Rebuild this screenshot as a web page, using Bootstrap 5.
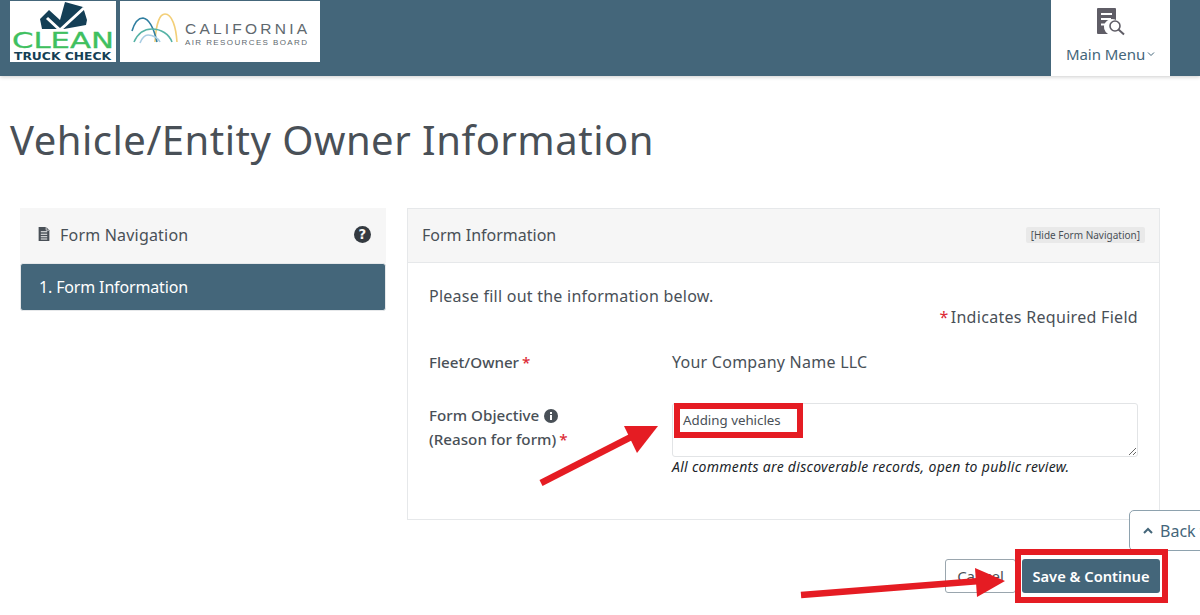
<!DOCTYPE html>
<html lang="en">
<head>
<meta charset="utf-8">
<title>Vehicle/Entity Owner Information</title>
<link href="https://cdn.jsdelivr.net/npm/bootstrap@5.3.0/dist/css/bootstrap.min.css" rel="stylesheet">
<style>
html,body{height:615px;overflow:hidden}
body{font-family:"Noto Sans","Open Sans","Liberation Sans",sans-serif;color:#495057;background:#fff;position:relative;font-size:16px}
.topbar{height:76px;background:#44667a;box-shadow:0 1px 4px rgba(0,0,0,.2);padding:1px 30px 0 10px}
.logo-clean{width:106px;height:61px;background:#fff;display:block}
.logo-carb{width:200px;height:61px;background:#fff;display:block;margin-left:4px}
.menu-box{width:119px;height:76px;background:#fff;color:#44667a;margin-top:-1px;font-size:15px;padding-top:8px}
.menu-box svg{display:block}
.menu-label{line-height:20px;margin-top:8px;white-space:nowrap;display:flex;align-items:center;gap:2px;letter-spacing:-.05px}
.page-title{font-size:40px;font-weight:400;color:#495057;margin:39px 0 0 10px;line-height:50px;white-space:nowrap;letter-spacing:.5px}
.main-area{margin:43px 40px 0 20px;gap:21px;align-items:flex-start}
.side-col{width:366px;flex:none}
.form-col{flex:1;min-width:0}
.form-card{border-radius:0;border-color:#e6e8ea}
.side-head{height:55px;background:#f6f6f6;border:0;padding:0 15px 2px 17px;font-size:16px;color:#495057;letter-spacing:.2px}
.side-head .nav-label{margin-left:1px}
.side-active{height:48px;background:#44667a;color:#fff;border-radius:3px;padding:0 18px;font-size:16px;display:flex;align-items:center;border:1px solid #e6e8ea;letter-spacing:-.15px}
.form-head{height:54px;background:#f6f6f6;border-bottom:1px solid #e6e8ea;padding:0 14px 2px;font-size:16px}
.hide-link{font-size:10px;background:#e9e9e9;padding:1px 5px;color:#495057;line-height:14px;border-radius:2px}
.form-inner{height:256px;padding:21px 21px 0}
.intro{line-height:24px;font-size:16px;letter-spacing:.25px}
.req-note{line-height:24px;font-size:16px;margin-top:-3px;letter-spacing:.3px}
.req-note .star{margin-right:2px}
.star{color:#dc2a35}
.field-row{margin-top:21px}
.field-label{width:243px;flex:none;font-weight:500;font-size:15.2px;line-height:24px;color:#495057}
.field-label .star{margin-left:3px}
.field-value{font-size:16px;line-height:24px;letter-spacing:.25px}
.objective-row{margin-top:29px}
.objective-input.form-control{height:54px;width:100%;display:block;border:1px solid #e2e4e6;border-radius:3px;padding:5px 10px;font-size:13.3px;color:#495057;font-family:inherit;line-height:22px;box-shadow:none;min-height:0}
.hint{font-style:italic;font-size:14px;color:#212529;line-height:20px;margin-top:0;letter-spacing:.3px;white-space:nowrap}
.info-dot{width:14px;height:14px;vertical-align:-2px;margin-left:1px}
.action-row{position:absolute;left:945px;top:559px;gap:6px}
.cancel-btn{width:71px;height:34px;padding:0;border:1px solid #9aa6ae;color:#495057;background:#fff;font-size:15px;border-radius:3px}
.save-btn{width:138px;height:34px;padding:0;border:0;background:#44667a;color:#fff;font-size:14.7px;font-weight:600;border-radius:3px;--bs-btn-color:#fff}
.back-top{position:absolute;left:1129px;top:510px;width:120px;height:41px;border:1px solid #8ea2ae;border-radius:5px 0 0 5px;background:#fff;color:#44667a;font-size:16px;display:flex;align-items:center;padding-left:13px;gap:7px;white-space:nowrap}
.back-top svg{flex:none}
.annotate{position:absolute;left:0;top:0;width:1200px;height:615px;pointer-events:none}
</style>
</head>
<body>
<header class="topbar d-flex justify-content-between align-items-start">
  <div class="d-flex">
    <svg class="logo-clean" viewBox="0 0 106 61" role="img" aria-label="Clean Truck Check">
      <rect width="106" height="61" fill="#fff"/>
      <path d="M30 18 L39 9 L50 19 L55 1 L73 6 L77 19 L76 24 L54 28 L32 28 Z" fill="#143f56"/>
      <path d="M37 17 L50 29 L74 7" fill="none" stroke="#fff" stroke-width="3"/>
      <text x="2" y="47" font-family="'DejaVu Sans',sans-serif" font-size="21" fill="#3fc05f" stroke="#3fc05f" stroke-width=".3" textLength="102" lengthAdjust="spacingAndGlyphs">CLEAN</text>
      <text x="4" y="59" font-family="'DejaVu Sans',sans-serif" font-weight="700" font-size="10" fill="#143f56" textLength="97" lengthAdjust="spacingAndGlyphs">TRUCK CHECK</text>
    </svg>
    <svg class="logo-carb" viewBox="0 0 200 61" role="img" aria-label="California Air Resources Board">
      <rect width="200" height="61" fill="#fff"/>
      <g fill="none" stroke-width="1.6">
        <path d="M35 41 C36 22 40 13 45 13 C52 13 56 26 57 41" stroke="#f3cf78"/>
        <path d="M12 30 C15 20 19 17 23 17 C29 18 34 28 37 41" stroke="#2f7ea0"/>
        <path d="M14 41 C18 32 25 28 32 28 C41 28 49 33 52 41" stroke="#56b3a6"/>
        <path d="M20 42 C22 37 25 34 28 34 C33 34 38 37 40 41" stroke="#a9cde4"/>
      </g>
      <text x="65" y="33" font-family="'Liberation Sans',sans-serif" font-size="15.5" fill="#60696e" textLength="122" lengthAdjust="spacing">CALIFORNIA</text>
      <text x="65" y="43.7" font-family="'Liberation Sans',sans-serif" font-size="8" fill="#60696e" textLength="122" lengthAdjust="spacing">AIR RESOURCES BOARD</text>
    </svg>
  </div>
  <div class="menu-box d-flex flex-column align-items-center">
    <svg width="28" height="28" viewBox="0 0 28 28" aria-hidden="true">
      <path d="M1 0 H18 a1 1 0 0 1 1 1 V12 A7 7 0 0 0 11 26 H1 a1 1 0 0 1-1-1 V1 a1 1 0 0 1 1-1Z" fill="#5f5d66"/>
      <path d="M4 6H15M4 11H14M4 16.5H10" stroke="#fff" stroke-width="1.8"/>
      <circle cx="18" cy="18" r="5" fill="#fff" stroke="#5f5d66" stroke-width="1.6"/>
      <path d="M21.5 21.5 L27 26.5" stroke="#5f5d66" stroke-width="2"/>
    </svg>
    <div class="menu-label">Main Menu <svg width="8" height="6" viewBox="0 0 8 6" aria-hidden="true"><path d="M1 1.5 L4 4.5 L7 1.5" fill="none" stroke="#44667a" stroke-width="1"/></svg></div>
  </div>
</header>

<h1 class="page-title">Vehicle/Entity Owner Information</h1>

<main class="main-area d-flex">
  <aside class="side-col">
    <div class="side-head d-flex align-items-center justify-content-between">
      <span class="d-flex align-items-center gap-2">
        <svg width="14" height="15" viewBox="0 0 12 14" aria-hidden="true"><path d="M1 0 H8 L11 3 V13 H1 Z" fill="#495057"/><path d="M3 4.5H9M3 6.8H9M3 9.1H9M3 11.2H9" stroke="#f6f6f6" stroke-width="1"/><path d="M8 0V3H11" fill="none" stroke="#f6f6f6" stroke-width=".7"/></svg>
        <span class="nav-label">Form Navigation</span>
      </span>
      <svg width="17" height="17" viewBox="0 0 16 16" aria-hidden="true"><circle cx="8" cy="8" r="8" fill="#343a40"/><text x="8" y="12.6" text-anchor="middle" font-family="'DejaVu Sans',sans-serif" font-weight="700" font-size="12.5" fill="#f6f6f6">?</text></svg>
    </div>
    <div class="side-active">1. Form Information</div>
  </aside>

  <section class="form-col card form-card">
    <div class="form-head d-flex align-items-center justify-content-between">
      <span>Form Information</span>
      <span class="hide-link">[Hide Form Navigation]</span>
    </div>
    <div class="form-inner">
      <div class="intro">Please fill out the information below.</div>
      <div class="req-note text-end"><span class="star">*</span>Indicates Required Field</div>
      <div class="field-row d-flex">
        <div class="field-label">Fleet/Owner<span class="star">*</span></div>
        <div class="field-value">Your Company Name LLC</div>
      </div>
      <div class="objective-row d-flex">
        <div class="field-label">Form Objective <svg class="info-dot" viewBox="0 0 14 14" aria-hidden="true"><circle cx="7" cy="7" r="7" fill="#495057"/><rect x="6" y="6" width="2" height="5" fill="#fff"/><rect x="6" y="3" width="2" height="2" fill="#fff"/></svg><br>(Reason for form)<span class="star">*</span></div>
        <div class="flex-grow-1">
          <textarea class="objective-input form-control" aria-label="Form Objective">Adding vehicles</textarea>
          <div class="hint">All comments are discoverable records, open to public review.</div>
        </div>
      </div>
    </div>
  </section>
</main>

<a class="back-top text-decoration-none" href="#"><svg width="10" height="7" viewBox="0 0 10 7" aria-hidden="true"><path d="M1 6 L5 2 L9 6" fill="none" stroke="#44667a" stroke-width="2"/></svg>Back to Top</a>
<div class="action-row d-flex">
  <button class="btn cancel-btn" type="button">Cancel</button>
  <button class="btn save-btn" type="button">Save &amp; Continue</button>
</div>

<svg class="annotate" viewBox="0 0 1200 615" aria-hidden="true">
  <rect x="677" y="406" width="123" height="29" fill="none" stroke="#e51c23" stroke-width="6"/>
  <rect x="1018" y="552" width="147" height="48" fill="none" stroke="#e51c23" stroke-width="6"/>
  <path d="M541 483 L631 437" stroke="#e51c23" stroke-width="6.5" fill="none"/>
  <path d="M624 426 L658 426 L637 453 Z" fill="#e51c23"/>
  <path d="M801 595 L980 581" stroke="#e51c23" stroke-width="6.5" fill="none"/>
  <path d="M975 568 L1005 581 L977 597 Z" fill="#e51c23"/>
</svg>
<script src="https://cdn.jsdelivr.net/npm/bootstrap@5.3.0/dist/js/bootstrap.bundle.min.js"></script>
</body>
</html>
